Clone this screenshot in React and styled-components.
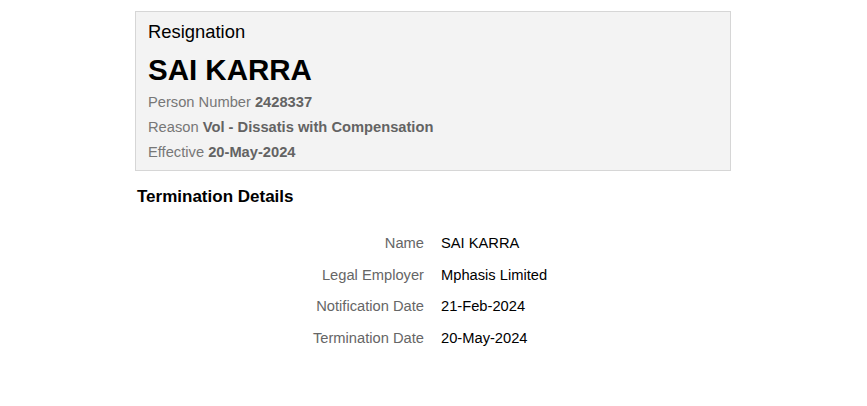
import React from "react";
import styled, { createGlobalStyle } from "styled-components";

const GlobalStyle = createGlobalStyle`
  body {
    margin: 0;
    background: #fff;
    font-family: "Liberation Sans", Arial, sans-serif;
  }
`;

const details = [
  { label: "Name", value: "SAI KARRA" },
  { label: "Legal Employer", value: "Mphasis Limited" },
  { label: "Notification Date", value: "21-Feb-2024" },
  { label: "Termination Date", value: "20-May-2024" },
];

const App = () => {
  return (
    <>
      <GlobalStyle />
      <PageWrapper>
        <HeaderBox>
          <ActionTitle>Resignation</ActionTitle>
          <PersonName>SAI KARRA</PersonName>
          <MetaList>
            <MetaLine>
              Person Number <strong>2428337</strong>
            </MetaLine>
            <MetaLine>
              Reason <strong>Vol - Dissatis with Compensation</strong>
            </MetaLine>
            <MetaLine>
              Effective <strong>20-May-2024</strong>
            </MetaLine>
          </MetaList>
        </HeaderBox>
        <SectionTitle>Termination Details</SectionTitle>
        <DetailsGrid>
          {details.map((d) => (
            <React.Fragment key={d.label}>
              <Label>{d.label}</Label>
              <Value>{d.value}</Value>
            </React.Fragment>
          ))}
        </DetailsGrid>
      </PageWrapper>
    </>
  );
};

const PageWrapper = styled.div`
  width: 596px;
  padding: 11px 0 0 135px;
`;

const HeaderBox = styled.div`
  background-color: #f3f3f3;
  border: 1px solid #d6d6d6;
  padding: 9px 12px 5px 12px;
`;

const ActionTitle = styled.div`
  font-size: 18.4px;
  line-height: 22px;
  color: #000;
`;

const PersonName = styled.div`
  margin-top: 9px;
  font-size: 29.5px;
  line-height: 36px;
  font-weight: bold;
  color: #000;
`;

const MetaList = styled.div`
  margin-top: 2px;
`;

const MetaLine = styled.div`
  font-size: 14.7px;
  line-height: 25px;
  color: #777;
  strong {
    color: #636363;
    font-weight: bold;
  }
`;

const SectionTitle = styled.div`
  margin: 16px 0 0 2px;
  font-size: 17px;
  line-height: 20px;
  font-weight: bold;
  color: #000;
`;

const DetailsGrid = styled.div`
  display: grid;
  grid-template-columns: 289px auto;
  column-gap: 17px;
  margin-top: 21px;
  font-size: 14.7px;
  line-height: 31.6px;
`;

const Label = styled.div`
  text-align: right;
  color: #666;
`;

const Value = styled.div`
  color: #000;
`;

export default App;
